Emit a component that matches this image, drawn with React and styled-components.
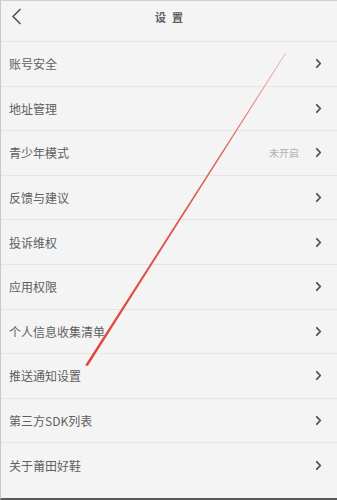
import React from "react";
import styled, { createGlobalStyle } from "styled-components";

const Global = createGlobalStyle`
  html, body { margin: 0; padding: 0; background: #f4f4f4; }
  body { font-family: "Noto Sans CJK SC", "Noto Sans", sans-serif; }
  * { box-sizing: border-box; }
`;

const Page = styled.div`
  position: relative;
  width: 337px;
  height: 500px;
  background: #f4f4f4;
  border-left: 1px solid #c9c9c9;
  border-top: 1px solid #d0d0d0;
  border-bottom: 2px solid #5a5a5a;
  display: flex;
  flex-direction: column;
  overflow: hidden;
`;

const Header = styled.header`
  height: 41px;
  flex: none;
  display: flex;
  align-items: flex-start;
  justify-content: center;
  position: relative;
  border-bottom: 1px solid #e6e6e6;
`;

const Back = styled.button`
  position: absolute;
  left: 8px;
  top: 7px;
  width: 14px;
  height: 16px;
  padding: 0;
  border: 0;
  background: none;
  display: flex;
  align-items: center;
  justify-content: center;
`;

const Title = styled.h1`
  margin: 0;
  padding-top: 8px;
  font-family: "Noto Sans CJK SC", serif;
  font-size: 11px;
  font-weight: 700;
  letter-spacing: 6px;
  margin-right: -6px;
  color: #5e5e5e;
`;

const List = styled.ul`
  list-style: none;
  margin: 0;
  padding: 0;
`;

const Row = styled.li`
  height: 44.6px;
  display: flex;
  align-items: center;
  padding: 0 15px 0 8px;
  border-bottom: ${(p) => (p.$last ? "0" : "1px solid #e6e6e6")};
`;

const Label = styled.span`
  flex: 1;
  font-size: 12px;
  color: #606060;
`;

const Status = styled.span`
  font-size: 10px;
  color: #b2b2b2;
  margin-right: 16px;
`;

const Overlay = styled.svg`
  position: absolute;
  left: 0;
  top: 0;
  pointer-events: none;
`;

const Chevron = ({ left }) => (
  <svg width={left ? 12 : 7} height={left ? 17 : 11} viewBox={left ? "0 0 12 17" : "0 0 7 11"}>
    {left ? (
      <path d="M10 1.5 L3 8.5 L10 15.5" fill="none" stroke="#555" strokeWidth="1.7" strokeLinecap="round" strokeLinejoin="round" />
    ) : (
      <path d="M1.8 1.8 L5.3 5.5 L1.8 9.2" fill="none" stroke="#555" strokeWidth="1.8" strokeLinecap="round" strokeLinejoin="round" />
    )}
  </svg>
);

const items = [
  { label: "账号安全" },
  { label: "地址管理" },
  { label: "青少年模式", status: "未开启" },
  { label: "反馈与建议" },
  { label: "投诉维权" },
  { label: "应用权限" },
  { label: "个人信息收集清单" },
  { label: "推送通知设置" },
  { label: "第三方SDK列表" },
  { label: "关于莆田好鞋" },
];

export default function App() {
  return (
    <>
      <Global />
      <Page>
        <Header>
          <Back aria-label="返回">
            <Chevron left />
          </Back>
          <Title>设置</Title>
        </Header>
        <List>
          {items.map((it, i) => (
            <Row key={it.label} $last={i === items.length - 1}>
              <Label>{it.label}</Label>
              {it.status && <Status>{it.status}</Status>}
              <Chevron />
            </Row>
          ))}
        </List>
        <Overlay width="337" height="500" viewBox="0 0 337 500">
          <defs>
            <linearGradient id="fade" x1="284" y1="52" x2="85" y2="365" gradientUnits="userSpaceOnUse">
              <stop offset="0" stopColor="#eab0b0" />
              <stop offset="0.3" stopColor="#e2605a" />
              <stop offset="1" stopColor="#e0443a" />
            </linearGradient>
          </defs>
          <polygon points="284.6,51.6 285.2,52.1 86.8,365 84.2,364.2" fill="url(#fade)" />
        </Overlay>
      </Page>
    </>
  );
}
